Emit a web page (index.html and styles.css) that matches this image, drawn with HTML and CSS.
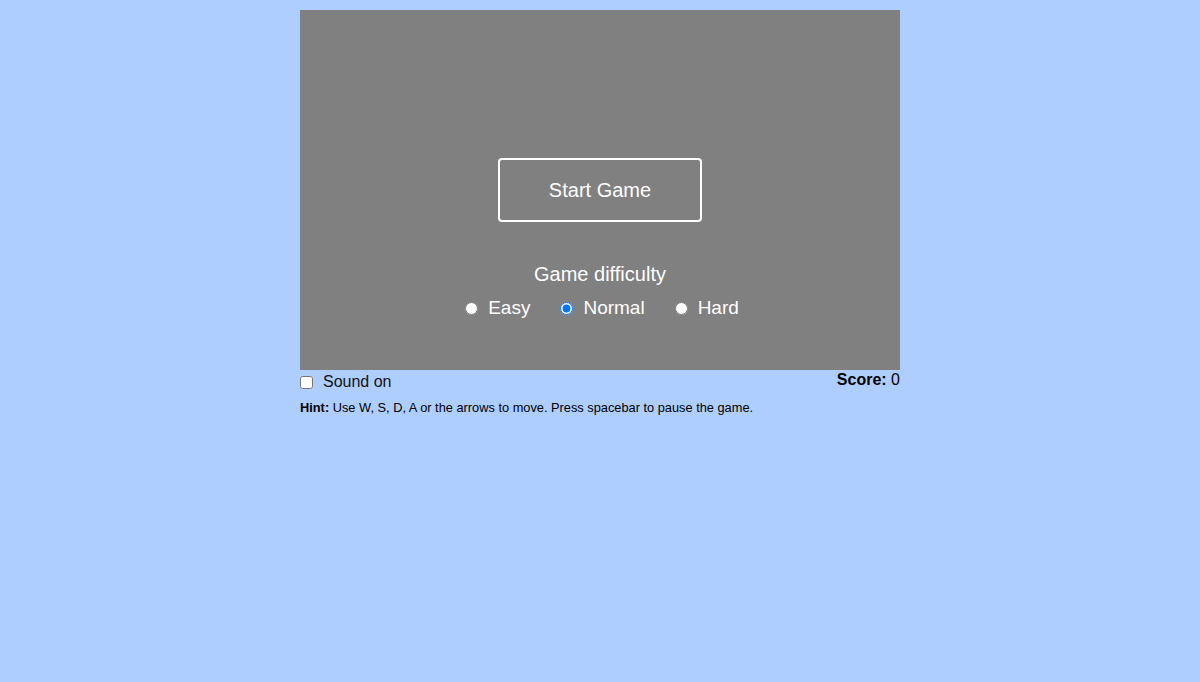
FILE: index.html
```html
<!DOCTYPE html>
<html>
<head>
<meta charset="utf-8">
<link rel="stylesheet" href="styles.css">
</head>
<body>
<div class="wrap">
  <div class="game">
    <button class="start">Start Game</button>
    <div class="difficulty">
      <div class="diff-title">Game difficulty</div>
      <div class="options">
        <label class="opt"><input type="radio" name="d"> Easy</label>
        <label class="opt"><input type="radio" name="d" checked> Normal</label>
        <label class="opt"><input type="radio" name="d"> Hard</label>
      </div>
    </div>
  </div>
  <div class="bar">
    <label class="sound"><input type="checkbox"> Sound on</label>
    <div class="score"><b>Score:</b> 0</div>
  </div>
  <div class="hint"><b>Hint:</b> Use W, S, D, A or the arrows to move. Press spacebar to pause the game.</div>
</div>
</body>
</html>
```
FILE: styles.css
```css
html, body {
  margin: 0;
  padding: 0;
}
body {
  background: #aeceff;
  font-family: "Liberation Sans", Arial, sans-serif;
  padding-top: 10px;
}
.wrap {
  width: 600px;
  margin: 0 auto;
}
.game {
  height: 360px;
  background: #808080;
  display: flex;
  flex-direction: column;
  align-items: center;
  box-sizing: border-box;
  padding-top: 148px;
}
.start {
  width: 204px;
  height: 64px;
  background: transparent;
  border: 2px solid #fff;
  border-radius: 4px;
  color: #fff;
  font-family: "Liberation Sans", Arial, sans-serif;
  font-size: 20px;
  padding: 0;
}
.difficulty {
  margin-top: 40px;
  color: #fff;
  text-align: center;
}
.diff-title {
  font-size: 20px;
  line-height: 24px;
}
.options {
  display: flex;
  gap: 30px;
  justify-content: center;
  margin-top: 11px;
  padding-left: 4px;
  font-size: 19px;
}
.opt {
  display: flex;
  align-items: center;
}
.opt input {
  margin: 0 10px 0 0;
  width: 13px;
  height: 13px;
}
.bar {
  display: flex;
  justify-content: space-between;
  align-items: flex-start;
  color: #000;
  font-size: 16px;
}
.sound {
  display: flex;
  align-items: center;
  margin-top: 3px;
  color: #111;
}
.sound input {
  margin: 0 10px 0 0;
  width: 13px;
  height: 13px;
}
.score {
  margin-top: 1px;
}
.hint {
  font-size: 12.8px;
  margin-top: 9px;
}
```
